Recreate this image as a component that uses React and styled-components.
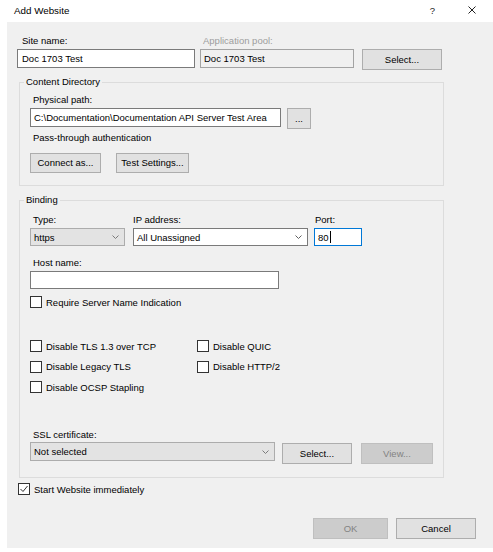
import React from 'react'
import styled, { createGlobalStyle } from 'styled-components'

// IIS "Add Website" dialog, drawn with plain divs so every box is pixel-steady.

const Global = createGlobalStyle`
    html, body {
        margin: 0;
        padding: 0;
        background: #ffffff;
    }
    body {
        font-family: "Liberation Sans", Arial, sans-serif;
        font-size: 9.5px;
        color: #000000;
    }
`

const Window = styled.div`
    width: 493px;
    height: 552px;
    background: #ffffff;
`

const TitleBar = styled.div`
    height: 22px;
    display: flex;
    align-items: center;
    padding: 0 17px 2px 14px;
    box-sizing: border-box;
`

const Title = styled.div`
    flex: 1;
    font-size: 9.8px;
`

const Help = styled.div`
    font-size: 9.5px;
    margin-right: 33px;
    color: #222;
`

const Body = styled.div`
    margin-left: 7px;
    height: 526px;
    background: #f0f0f0;
    box-sizing: border-box;
    padding: 12px 0 0 10px;
    display: flex;
    flex-direction: column;
`

const Row = styled.div`
    display: flex;
    align-items: flex-start;
    gap: ${p => p.gap || 0}px;
    margin-top: ${p => p.top || 0}px;
`

const Field = styled.div`
    display: flex;
    flex-direction: column;
    width: ${p => p.w}px;
`

const Label = styled.div`
    line-height: 14px;
    height: 14px;
    margin-bottom: 1px;
    margin-top: ${p => p.top || 0}px;
    padding-left: ${p => p.indent ?? 3}px;
    color: ${p => p.disabled ? '#9d9d9d' : '#000'};
    white-space: nowrap;
`

const TextBox = styled.div`
    box-sizing: border-box;
    width: ${p => p.w ? p.w + 'px' : '100%'};
    height: ${p => p.h || 19}px;
    border: 1px solid ${p => p.focus ? '#0078d7' : p.disabled ? '#a3a3a3' : '#7a7a7a'};
    background: ${p => p.disabled ? '#f0f0f0' : '#ffffff'};
    padding: 0 ${p => p.pad || 3}px;
    display: flex;
    align-items: center;
    white-space: nowrap;
    overflow: hidden;
`

const Caret = styled.span`
    display: inline-block;
    width: 1px;
    height: 12px;
    background: #000;
    margin-left: 1px;
`

const Combo = styled.div`
    box-sizing: border-box;
    width: ${p => p.w}px;
    height: ${p => p.h || 18}px;
    border: 1px solid ${p => p.flat ? '#acacac' : '#7a7a7a'};
    background: ${p => p.flat ? '#e3e3e3' : '#ffffff'};
    padding: 0 5px 0 3px;
    display: flex;
    align-items: center;
    justify-content: space-between;
    white-space: nowrap;
`

const Button = styled.div`
    box-sizing: border-box;
    width: ${p => p.w}px;
    height: ${p => p.h || 21}px;
    margin-top: ${p => p.top || 0}px;
    border: 1px solid ${p => p.disabled ? '#bfbfbf' : '#adadad'};
    background: ${p => p.disabled ? '#cccccc' : '#e1e1e1'};
    color: ${p => p.disabled ? '#838383' : '#000'};
    display: flex;
    align-items: center;
    justify-content: center;
    padding-bottom: 1px;
    white-space: nowrap;
`

const Group = styled.fieldset`
    box-sizing: border-box;
    width: 425px;
    margin: ${p => p.top}px 0 0 2px;
    padding: ${p => p.padTop}px 10px ${p => p.padBottom}px 10px;
    border: 1px solid #dcdcdc;
    min-inline-size: 0;
`

const Legend = styled.legend`
    line-height: 14px;
    padding: 0 2px;
    margin-left: -6px;
`

const Check = styled.div`
    display: flex;
    align-items: center;
    height: 14px;
    margin-top: ${p => p.top || 0}px;
    margin-left: ${p => p.left || 0}px;
    white-space: nowrap;
`

const Box = styled.div`
    box-sizing: border-box;
    width: 12px;
    height: 12px;
    border: 1px solid #333333;
    background: #ffffff;
    margin-right: 4px;
    display: flex;
    align-items: center;
    justify-content: center;
`

const CheckGrid = styled.div`
    display: grid;
    grid-template-columns: 167px auto;
    grid-auto-rows: 14px;
    row-gap: 6.5px;
    margin-top: 30px;
`

const Footer = styled.div`
    display: flex;
    justify-content: flex-end;
    gap: 8px;
    margin: 22px 17px 0 0;
`

const Chevron = ({ color = '#606060' }) => (
    <svg width="7" height="4" viewBox="0 0 7 4">
        <path d="M0.5 0.5 L3.5 3.5 L6.5 0.5" fill="none" stroke={color} strokeWidth="1" />
    </svg>
)

const CloseIcon = () => (
    <svg width="8" height="8" viewBox="0 0 8 8">
        <path d="M0.5 0.5 L7.5 7.5 M7.5 0.5 L0.5 7.5" fill="none" stroke="#222" strokeWidth="1" />
    </svg>
)

const Tick = () => (
    <svg width="10" height="10" viewBox="0 0 10 10">
        <path d="M1.5 5 L4 7.5 L8.5 2" fill="none" stroke="#333" strokeWidth="1" />
    </svg>
)

const CheckItem = ({ label, checked, ...rest }) => (
    <Check {...rest}>
        <Box>{checked && <Tick />}</Box>
        {label}
    </Check>
)

export default function App() {
    return (
        <Window>
            <Global />
            <TitleBar>
                <Title>Add Website</Title>
                <Help>?</Help>
                <CloseIcon />
            </TitleBar>
            <Body>
                <Row>
                    <Field w={178}>
                        <Label indent={5}>Site name:</Label>
                        <TextBox pad={4}>Doc 1703 Test</TextBox>
                    </Field>
                    <Field w={154} style={{ marginLeft: 5 }}>
                        <Label disabled>Application pool:</Label>
                        <TextBox disabled>Doc 1703 Test</TextBox>
                    </Field>
                    <Button w={80} top={15} style={{ marginLeft: 8 }}>Select...</Button>
                </Row>

                <Group top={5} padTop={4} padBottom={12}>
                    <Legend>Content Directory</Legend>
                    <Label>Physical path:</Label>
                    <Row gap={6}>
                        <TextBox w={251}>C:\Documentation\Documentation API Server Test Area</TextBox>
                        <Button w={24}>...</Button>
                    </Row>
                    <Label top={2}>Pass-through authentication</Label>
                    <Row gap={15} top={8}>
                        <Button w={71} h={20}>Connect as...</Button>
                        <Button w={73} h={20}>Test Settings...</Button>
                    </Row>
                </Group>

                <Group top={7} padTop={6} padBottom={13}>
                    <Legend>Binding</Legend>
                    <Row>
                        <Field w={95}>
                            <Label>Type:</Label>
                            <Combo w={95} flat>https<Chevron color="#7a7a7a" /></Combo>
                        </Field>
                        <Field w={175} style={{ marginLeft: 8 }}>
                            <Label indent={0}>IP address:</Label>
                            <Combo w={175}>All Unassigned<Chevron /></Combo>
                        </Field>
                        <Field w={48} style={{ marginLeft: 6 }}>
                            <Label indent={1}>Port:</Label>
                            <TextBox h={18} focus>80<Caret /></TextBox>
                        </Field>
                    </Row>
                    <Label top={10}>Host name:</Label>
                    <TextBox w={249} h={18}></TextBox>
                    <CheckItem top={6} label="Require Server Name Indication" />
                    <CheckGrid>
                        <CheckItem label="Disable TLS 1.3 over TCP" />
                        <CheckItem label="Disable QUIC" />
                        <CheckItem label="Disable Legacy TLS" />
                        <CheckItem label="Disable HTTP/2" />
                        <CheckItem label="Disable OCSP Stapling" />
                    </CheckGrid>
                    <Label top={34} style={{ marginBottom: 0 }}>SSL certificate:</Label>
                    <Row>
                        <Combo w={245} h={19} flat>Not selected<Chevron color="#7a7a7a" /></Combo>
                        <Button w={70} top={1} style={{ marginLeft: 7 }}>Select...</Button>
                        <Button w={72} top={1} disabled style={{ marginLeft: 9 }}>View...</Button>
                    </Row>
                </Group>

                <CheckItem top={4} left={1} checked label="Start Website immediately" />

                <Footer>
                    <Button w={75} disabled>OK</Button>
                    <Button w={80}>Cancel</Button>
                </Footer>
            </Body>
        </Window>
    )
}
